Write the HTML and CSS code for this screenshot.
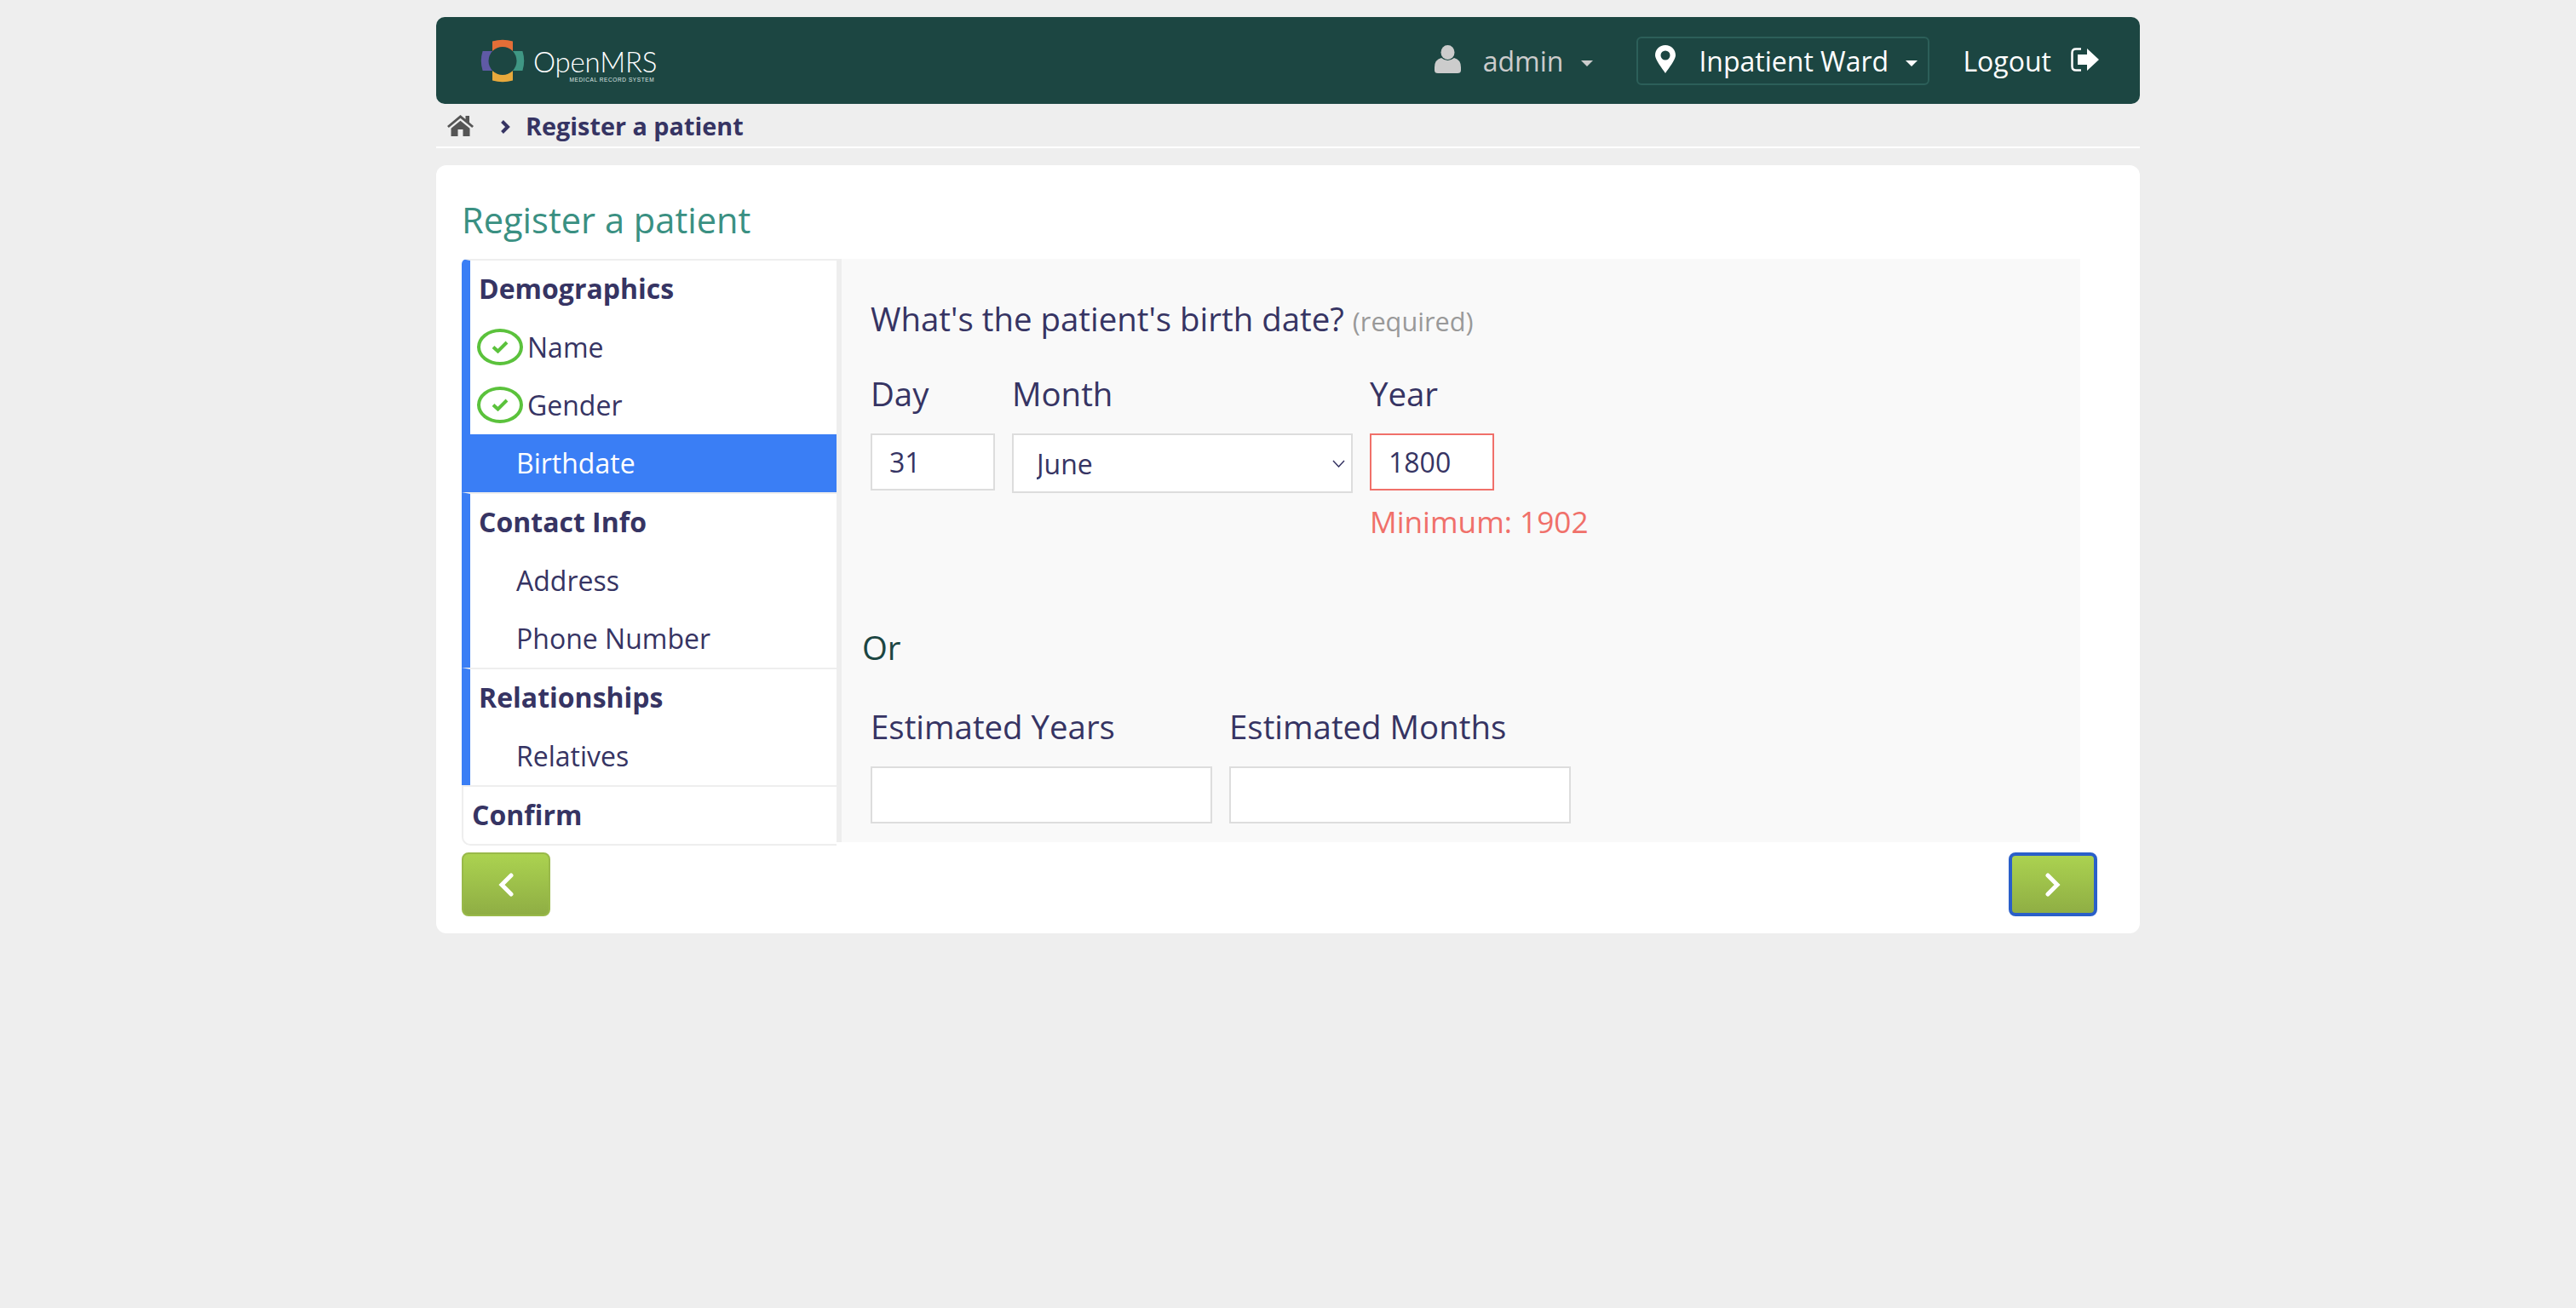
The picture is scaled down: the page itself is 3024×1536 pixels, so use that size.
FILE: index.html
```html
<!DOCTYPE html>
<html lang="en">
<head>
<meta charset="utf-8">
<title>Register a patient</title>
<link rel="stylesheet" href="styles.css">
</head>
<body>
<div class="page">
  <header class="topbar">
    <div class="logo">
      <svg class="logo-mark" viewBox="0 0 52 51" width="52" height="51">
        <path fill="#e46e37" d="M14 14V2.6Q26-1 38 2.6V14z"/>
        <path fill="#e8a93c" d="M14 37V48.4Q26 52 38 48.4V37z"/>
        <path fill="#5f5aa6" d="M14 14H2.6Q-1 25.500 2.600 37H14z"/>
        <path fill="#3f9784" d="M38 14H49.400Q53 25.500 49.400 37H38z"/>
        <circle cx="26" cy="25.500" r="16.500" fill="#1c4642"/>
      </svg>
      <div class="logo-text">
        <span class="logo-name">OpenMRS</span>
        <span class="logo-sub">MEDICAL RECORD SYSTEM</span>
      </div>
    </div>
    <div class="user">
      <svg class="icon-user" viewBox="0 0 31 33" width="31" height="33"><ellipse cx="15.500" cy="8.500" rx="8" ry="8.500" fill="#ccc"/><path fill="#ccc" d="M8 15Q15.500 21 23 15 31 17 31 26V29.500Q31 33 27 33H4Q0 33 0 29.500V26Q0 17 8 15z"/></svg>
      <span class="user-name">admin</span>
      <span class="caret caret-grey"></span>
    </div>
    <div class="ward">
      <svg class="icon-pin" viewBox="0 0 24 33" width="24" height="33"><path fill="#fff" fill-rule="evenodd" d="M12 0C5 0 0 5 0 12 0 17 8 27 12 33 16 27 24 17 24 12 24 5 19 0 12 0zM12 6.500A5.500 5.500 0 1 1 12 17.500 5.500 5.500 0 1 1 12 6.500z"/></svg>
      <span class="ward-name">Inpatient Ward</span>
      <span class="caret"></span>
    </div>
    <div class="logout">
      <span>Logout</span>
      <svg class="icon-out" viewBox="0 0 34 28" width="34" height="28"><path fill="none" stroke="#fff" stroke-width="2.500" d="M12 1.500H6Q1.500 1.500 1.500 6V22Q1.500 26.500 6 26.500H12"/><path fill="#fff" d="M8 8H19V1L33 14 19 27V20H8z"/></svg>
    </div>
  </header>

  <nav class="crumbs">
    <svg class="icon-home" viewBox="0 0 31 25" width="31" height="25"><path fill="#555" d="M15.500 0L0 13 1.800 15 15.500 3.800 29.200 15 31 13 26 8.800V1H21.500V5z"/><path fill="#555" d="M4.500 15.800V25H12.500V17H18.500V25H26.500V15.800L15.500 6.800z"/></svg>
    <svg class="icon-sep" viewBox="0 0 11 16" width="11" height="16"><path fill="none" stroke="#363463" stroke-width="4" d="M1.500 1.500L8 8 1.500 14.500"/></svg>
    <span class="crumb-current">Register a patient</span>
  </nav>

  <main class="panel">
    <h1 class="title">Register a patient</h1>
    <div class="form">
      <div class="steps">
        <section class="step">
          <div class="step-head">Demographics</div>
          <div class="step-item done">
            <span class="tick"><svg viewBox="0 0 20 15" width="20" height="15"><path fill="none" stroke="#5bc23c" stroke-width="4" d="M2 7.500L7.500 12.500 18 2"/></svg></span>Name
          </div>
          <div class="step-item done">
            <span class="tick"><svg viewBox="0 0 20 15" width="20" height="15"><path fill="none" stroke="#5bc23c" stroke-width="4" d="M2 7.500L7.500 12.500 18 2"/></svg></span>Gender
          </div>
          <div class="step-item current">Birthdate</div>
        </section>
        <section class="step">
          <div class="step-head">Contact Info</div>
          <div class="step-item">Address</div>
          <div class="step-item">Phone Number</div>
        </section>
        <section class="step">
          <div class="step-head">Relationships</div>
          <div class="step-item">Relatives</div>
        </section>
        <section class="step step-last">
          <div class="step-head">Confirm</div>
        </section>
      </div>

      <div class="content">
        <h2 class="question">What's the patient's birth date? <small class="required">(required)</small></h2>
        <div class="fields">
          <div class="field">
            <label class="field-label" for="day">Day</label>
            <input id="day" class="input input-short" type="text" value="31">
          </div>
          <div class="field">
            <label class="field-label" for="month">Month</label>
            <div class="select-wrap">
              <select id="month" class="input select"><option>June</option></select>
              <svg class="select-arrow" viewBox="0 0 15 9" width="15" height="9"><path fill="none" stroke="#363463" stroke-width="1.500" d="M1 1L7.500 8 14 1"/></svg>
            </div>
          </div>
          <div class="field">
            <label class="field-label" for="year">Year</label>
            <input id="year" class="input input-short input-error" type="text" value="1800">
            <span class="error">Minimum: 1902</span>
          </div>
        </div>
        <p class="or">Or</p>
        <div class="fields">
          <div class="field">
            <label class="field-label" for="ey">Estimated Years</label>
            <input id="ey" class="input input-wide" type="text">
          </div>
          <div class="field">
            <label class="field-label" for="em">Estimated Months</label>
            <input id="em" class="input input-wide" type="text">
          </div>
        </div>
      </div>
    </div>

    <div class="actions">
      <button class="btn" type="button" aria-label="Previous"><svg viewBox="0 0 18 28" width="18" height="28"><path fill="none" stroke="#fff" stroke-width="5" stroke-linecap="round" stroke-linejoin="miter" d="M15 3L4 14 15 25"/></svg></button>
      <button class="btn btn-focus" type="button" aria-label="Next"><svg viewBox="0 0 18 28" width="18" height="28"><path fill="none" stroke="#fff" stroke-width="5" stroke-linecap="round" stroke-linejoin="miter" d="M3 3L14 14 3 25"/></svg></button>
    </div>
  </main>
</div>
</body>
</html>
```

FILE: styles.css
```css
* { box-sizing: border-box; }
html, body { margin: 0; padding: 0; }
body {
  background: #eeeeee;
  color: #363463;
  font-family: "Open Sans", "Liberation Sans", sans-serif;
  font-size: 32px;
}
.page { width: 2000px; margin: 0 auto; padding-top: 20px; }

.topbar {
  display: flex;
  align-items: center;
  height: 102px;
  background: #1c4642;
  border-radius: 10px;
  color: #fff;
  padding-left: 52px;
}
.logo { display: flex; align-items: center; gap: 10px; margin-right: auto; }
.logo-mark { display: block; }
.logo-text { display: flex; flex-direction: column; align-items: flex-end; padding-top: 10px; }
.logo-name { font-family: Lato, sans-serif; font-weight: 300; font-size: 33px; line-height: 34px; letter-spacing: -0.2px; }
.logo-sub { font-family: "Liberation Sans", sans-serif; font-size: 6.500px; line-height: 8px; letter-spacing: 0.6px; margin-right: 3px; margin-top: 1px; color: #dfe6e4; white-space: nowrap; }

.user { display: flex; align-items: center; color: #ccc; }
.icon-user { margin-right: 26px; margin-top: -3px; }
.user-name { font-size: 32px; }
.caret {
  display: block;
  width: 0; height: 0;
  border-left: 7px solid transparent;
  border-right: 7px solid transparent;
  border-top: 7px solid #fff;
  margin-top: 6px;
}
.caret-grey { border-top-color: #ccc; margin-left: 21px; }

.ward {
  display: flex;
  align-items: center;
  width: 344px;
  height: 57px;
  margin-left: 51px;
  padding-left: 20px;
  border: 2px solid #2c5f59;
  border-radius: 6px;
}
.icon-pin { margin-right: 27px; margin-top: -3px; }
.ward-name { margin-right: 20px; }

.logout { display: flex; align-items: center; gap: 23px; margin-left: 39px; margin-right: 47px; }
.icon-out { margin-top: -3px; }

.crumbs {
  display: flex;
  align-items: center;
  height: 52px;
  padding: 0 0 0 13px;
  border-bottom: 2px solid #fff;
}
.icon-sep { margin-left: 32px; margin-right: 18px; margin-top: 4px; }
.crumb-current { font-size: 28.800px; font-weight: 700; }

.panel {
  margin-top: 20px;
  height: 902px;
  background: #fff;
  border-radius: 12px;
  padding: 40px 50px 20px 30px;
}
.title {
  margin: 0 0 20px;
  font-size: 41.600px;
  line-height: 49px;
  height: 50px;
  font-weight: 400;
  color: #3a9082;
}
.form { display: flex; align-items: flex-start; }

.steps { width: 440px; flex: none; }
.step { border-left: 10px solid #3a7ef5; border-top: 2px solid #eee; }
.step:first-child { border-top-left-radius: 6px; }
.step-head { height: 68px; line-height: 66px; padding-left: 10px; font-size: 32px; font-weight: 700; white-space: nowrap; }
.step-item { display: flex; align-items: center; height: 68px; padding-left: 54px; padding-bottom: 2px; font-size: 32px; }
.step-item.done { padding-left: 8px; }
.step-item.current { margin-left: -10px; padding-left: 64px; background: #3a7ef5; color: #fff; }
.tick {
  display: flex;
  align-items: center;
  justify-content: center;
  width: 54px;
  height: 43px;
  margin-right: 5px;
  border: 4px solid #5bc23c;
  border-radius: 50%;
}
.step-last {
  border-left: 2px solid #eee;
  border-bottom: 2px solid #eee;
  border-bottom-left-radius: 10px;
}
.step-last .step-head { height: 67px; line-height: 65px; padding-left: 10px; }

.content {
  width: 1460px;
  height: 685px;
  background: #f9f9f9;
  border-left: 6px solid #eee;
  padding: 46px 0 0 34px;
}
.question { margin: 0; height: 50px; font-size: 38.400px; font-weight: 400; line-height: 49px; white-space: nowrap; }
.required { font-size: 30.700px; line-height: 0; color: #999; }
.fields { display: flex; gap: 20px; align-items: flex-start; }
.question + .fields { margin-top: 39px; }
.field { display: flex; flex-direction: column; }
.field-label { height: 50px; font-size: 38.400px; line-height: 47px; margin-bottom: 20px; white-space: nowrap; }
.input {
  display: block;
  height: 67px;
  border: 2px solid #ddd;
  border-radius: 0;
  background: #fff;
  color: #363463;
  font-family: inherit;
  font-size: 32px;
  padding: 0 20px;
  outline: none;
}
.input-short { width: 146px; }
.input-wide { width: 401px; }
.input-error { border-color: #f0706a; }
.select-wrap { position: relative; }
.select { width: 400px; height: 70px; padding-left: 27px; appearance: none; }
.select-arrow { position: absolute; right: 9px; top: 31px; pointer-events: none; }
.error { margin-top: 14px; height: 46px; font-size: 35.200px; line-height: 45px; color: #f0706a; white-space: nowrap; }
.or { margin: 101px 0 47px -10px; font-size: 38.400px; line-height: 46px; color: #1c4642; }

.actions { display: flex; justify-content: space-between; margin-top: 8px; }
.btn {
  display: flex;
  align-items: center;
  justify-content: center;
  width: 104px;
  height: 75px;
  padding: 0;
  border: 2px solid #99b94a;
  border-radius: 8px;
  background: linear-gradient(#abd250, #8fae44);
}
.btn-focus { border: 4px solid #2a5fc9; }
```
